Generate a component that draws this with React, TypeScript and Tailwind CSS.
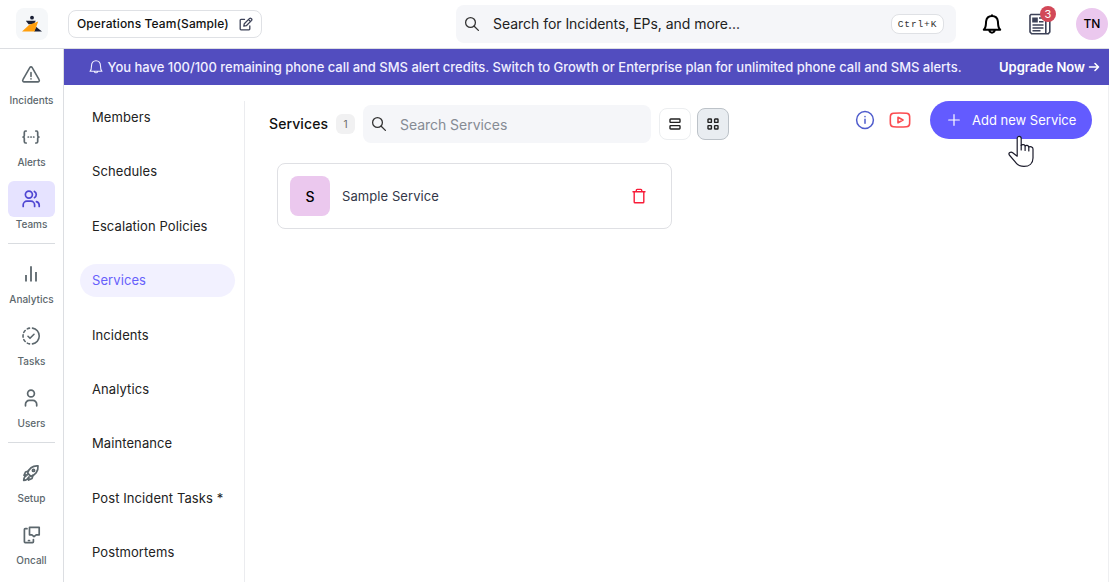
import React from 'react';

type IconProps = { className?: string };

const Svg = ({ children, className = '', box = 24, sw = 1.5 }: { children: React.ReactNode; className?: string; box?: number; sw?: number }) => (
  <svg viewBox={`0 0 ${box} ${box}`} fill="none" stroke="currentColor" strokeWidth={sw} strokeLinecap="round" strokeLinejoin="round" className={`shrink-0 ${className}`}>
    {children}
  </svg>
);

const WarningIcon = () => (
  <Svg className="size-5" box={20} sw={1.6}>
    <path d="M8.8 2.6 1.9 14.6a1.5 1.5 0 0 0 1.3 2.3h13.6a1.5 1.5 0 0 0 1.3-2.3L11.2 2.6a1.4 1.4 0 0 0-2.4 0Z" />
    <path d="M10 7.5v4M10 13.7v.2" />
  </Svg>
);
const BracesIcon = () => (
  <Svg className="size-5" box={20} sw={1.7}>
    <path d="M5.2 4H4.6Q3.3 4 3.3 5.4V8.4Q3.3 10 2 10Q3.3 10 3.3 11.6V14.6Q3.3 16 4.6 16H5.2M14.8 4h.6q1.3 0 1.3 1.4v3q0 1.6 1.3 1.6q-1.3 0-1.3 1.6v3q0 1.4-1.3 1.4h-.6" />
    <path d="M7.2 10h.3M9.9 10h.3M12.6 10h.3" />
  </Svg>
);
const TeamsIcon = () => (
  <Svg className="size-5" box={20} sw={1.7}>
    <circle cx="7.9" cy="5.6" r="3.5" />
    <path d="M2.2 17.5v-1.7a3.7 3.7 0 0 1 3.7-3.6h4a3.7 3.7 0 0 1 3.7 3.6v1.7M13.4 2.5a3.5 3.5 0 0 1 0 6.2M15.4 12.6a3.7 3.7 0 0 1 2.8 3.4v1.5" />
  </Svg>
);
const ChartIcon = () => (
  <Svg className="size-5" box={20} sw={1.8}>
    <path d="M5 11v6.500M10 2.300v15.200M15 8v9.500" strokeLinecap="butt" />
  </Svg>
);
const TasksIcon = () => (
  <Svg className="size-5" box={20} sw={1.6}>
    <path d="M11.5 2.1a8 8 0 0 1 0 15.8M8.5 2.1a8 8 0 0 0-2.2.8M4.2 4.5a8 8 0 0 0-1.4 2M2.1 8.8a8 8 0 0 0 0 2.4M2.8 13.6a8 8 0 0 0 1.4 1.9M6.3 17.1a8 8 0 0 0 2.2.8M7 10.3l2 2 4-4" />
  </Svg>
);
const UserIcon = () => (
  <Svg className="size-5" box={20} sw={1.7}>
    <circle cx="10" cy="5.5" r="3.4" />
    <path d="M4.500 17.800v-1.500a3.800 3.800 0 0 1 3.800-3.900h3.600a3.800 3.800 0 0 1 3.800 3.900v1.500" />
  </Svg>
);
const RocketIcon = () => (
  <Svg className="size-5" box={20} sw={1.700}>
    <path d="M6.700 10.100C7.500 5.800 11.500 2.400 17 2.900 17.500 8.400 14 12.500 9.800 13.300Z" />
    <circle cx="12.500" cy="7.400" r="1.100" />
    <path d="M7.500 8.100 4.500 9 3 12.300l3.300-.4M11.900 12.400 11 15.500l-3.400 1.600.4-3.300M5.200 12.800C3.200 13.600 2.800 15.200 2.700 17.300c2 0 3.800-.5 4.500-2.500" />
  </Svg>
);
const OncallIcon = () => (
  <Svg className="size-5" box={20} sw={1.700}>
    <path d="M8.500 2.300h9.700v7.500h-3l-2.200 1.900-2.100-1.900H8.500ZM6 3.700H4.200q-.8 0-.8.8v12.300q0 .8.8.8h7.400q.8 0 .8-.8v-2.300M7.500 15.500h1" />
  </Svg>
);
const SearchIcon = ({ className = '' }: IconProps) => (
  <Svg className={`size-4 ${className}`} box={16} sw={1.300}>
    <circle cx="6.500" cy="6.500" r="4.900" />
    <path d="m10.200 10.200 4.200 4.200" />
  </Svg>
);
const BellIcon = ({ className = '' }: IconProps) => (
  <Svg className={className} sw={2}>
    <path d="M3.800 17.800h16.400M3.800 17.600c2.400-1.800 2-5 2.300-8.200C6.500 6.100 8.900 4 12 4s5.500 2.100 5.900 5.400c.3 3.200-.1 6.400 2.300 8.200M12 3.700v-.5M9.300 18.600a2.800 2.800 0 0 0 5.400 0" />
  </Svg>
);
const AlertBellIcon = () => (
  <Svg className="size-4" box={16} sw={1.100}>
    <path d="M2 12.300h12c-1.400-1.200-1.500-2.800-1.500-5.300C12.500 4 10.700 1.700 8 1.700S3.500 4 3.500 7c0 2.500-.1 4.100-1.500 5.300ZM6.300 12.600a1.800 1.800 0 0 0 3.400 0" />
  </Svg>
);

const Logo = () => (
  <svg viewBox="0 0 32 32" className="size-8 rounded-lg bg-[#f5f7f9]">
    <circle cx="16" cy="9.700" r="1.900" fill="#1b2036" />
    <path d="M9.800 12.800h10l-2 3.400h-5.300Z" fill="#1b2036" />
    <path d="M20 18.800 26 23.400H18Z" fill="#1b2036" />
    <path d="M22.200 13.400 18.500 23.400H6l7.300-6.600Z" fill="#ff9f0e" />
  </svg>
);

const NewsIcon = () => (
  <svg viewBox="0 0 24 24" fill="none" stroke="#3d4258" strokeWidth="1.600" className="size-6">
    <path d="M3 2.500h14.800v19.200H3.600L2 20V3.500ZM17.800 6.500h4V20l-1.500 1.700h-3.600" />
    <path d="M5 6.200h4v3.600H5Z" fill="#3d4258" />
    <path d="M11 6h4.500M11 9.700h4.500M4.500 13h11M4.500 16h11M4.500 18.700h8" />
  </svg>
);

type NavItemProps = { label: string; icon: React.ReactNode; active?: boolean };
const NavItem = ({ label, icon, active }: NavItemProps) => (
  <div className="flex h-[62px] flex-col items-center text-[#5c676d]">
    <div className={`flex h-9 w-[47px] items-center rounded-md pl-[13px] ${active ? 'bg-[#e6e3ff] text-[#4f46d2]' : ''}`}>{icon}</div>
    <span className="text-[10px] font-medium leading-[15px]">{label}</span>
  </div>
);
const Divider = () => <div className="mb-3 h-px w-[47px] bg-[#d9dce0]" />;

const Sidebar = () => (
  <nav className="flex w-16 shrink-0 flex-col border-r border-[#dcdee2] pl-2 pt-2">
    <div className="w-[47px]">
      <NavItem label="Incidents" icon={<WarningIcon />} />
      <NavItem label="Alerts" icon={<BracesIcon />} />
      <NavItem label="Teams" icon={<TeamsIcon />} active />
      <Divider />
      <NavItem label="Analytics" icon={<ChartIcon />} />
      <NavItem label="Tasks" icon={<TasksIcon />} />
      <NavItem label="Users" icon={<UserIcon />} />
      <Divider />
      <NavItem label="Setup" icon={<RocketIcon />} />
      <NavItem label="Oncall" icon={<OncallIcon />} />
    </div>
  </nav>
);

const Header = () => (
  <header className="flex h-[49px] shrink-0 items-center border-b border-[#dcdee2] pl-4">
    <Logo />
    <div className="ml-5 flex h-7 w-[194px] shrink-0 items-center rounded-lg border border-[#dfe1e5] pl-2">
      <span className="w-[162px] whitespace-nowrap text-[12px] font-medium tracking-[0.11px] text-[#111]">Operations Team(Sample)</span>
      <Svg className="size-3.5 text-[#3d4258]" box={14} sw={1.300}>
        <path d="M5.500 2.400H2Q1.200 2.400 1.200 3.200V12Q1.200 12.800 2 12.800H10Q10.800 12.800 10.800 12V9M4.800 9.200l.5-2.500L10.600 1.400q.7-.6 1.400 0l.6.600q.6.700 0 1.400L7.300 8.700ZM9.600 2.600l2 2" />
      </Svg>
    </div>
    <div className="ml-[194px] flex h-[38px] w-[500px] shrink-0 items-center rounded-lg bg-[#f5f6f9] pl-2">
      <SearchIcon className="text-[#333]" />
      <span className="ml-[13px] flex-1 whitespace-nowrap pb-0.5 text-[14px] tracking-[-0.035px] text-[#222]">Search for Incidents, EPs, and more...</span>
      <span className="mr-3 flex h-5 w-[53px] items-center justify-center rounded-lg border border-[#dfe1e5] bg-white pt-0.5 font-['Liberation_Mono',monospace] text-[9.500px] tracking-[0.9px] text-[#333]">Ctrl+K</span>
    </div>
    <BellIcon className="ml-6 size-6 text-black" />
    <div className="relative ml-6 size-6 shrink-0">
      <NewsIcon />
      <span className="absolute -top-1.5 left-3 flex size-4 items-center justify-center rounded-full bg-[#d24858] text-[11px] leading-none text-white">3</span>
    </div>
    <div className="ml-6 flex size-8 shrink-0 items-center justify-center rounded-full bg-[#ebc8ee] text-[12px] font-medium text-black">TN</div>
  </header>
);

const Banner = () => (
  <div className="flex h-9 shrink-0 items-center bg-[#524dbf] pl-6 text-[13px] font-medium text-[#f1f0ff]">
    <AlertBellIcon />
    <span className="ml-[3.5px] flex-1 whitespace-nowrap pt-0.5 tracking-[-0.014px]">You have 100/100 remaining phone call and SMS alert credits. Switch to Growth or Enterprise plan for unlimited phone call and SMS alerts.</span>
    <span className="flex w-[110px] items-center whitespace-nowrap font-semibold text-white">
      <span className="w-[89px] pt-0.5">Upgrade Now</span>
      <Svg className="size-3" box={12} sw={1.600}><path d="M1.500 6h9M7 2.500 10.500 6 7 9.500" /></Svg>
    </span>
  </div>
);

const TABS = ['Members', 'Schedules', 'Escalation Policies', 'Services', 'Incidents', 'Analytics', 'Maintenance', 'Post Incident Tasks *', 'Postmortems'];

const SubNav = () => (
  <div className="mt-4 flex w-[181px] shrink-0 flex-col gap-[21.4px] border-r border-[#ebecef] pl-4">
    {TABS.map((t) => (
      <div key={t} className={`flex h-[33px] w-[155px] shrink-0 items-center whitespace-nowrap rounded-full pl-3 pt-[0.5px] text-[13px] tracking-[0.09px] ${t === 'Services' ? 'bg-[#f2f1ff] text-[#6760fb]' : 'text-[#222]'}`}>{t}</div>
    ))}
  </div>
);

const Toolbar = () => (
  <div className="flex h-[46px] items-center">
    <span className="w-[67px] pb-0.5 text-[14px] font-medium tracking-[0.1px] text-[#111]">Services</span>
    <span className="flex h-5 w-[19px] items-center justify-center rounded-md bg-[#f1f1f2] text-[10px] text-[#666]">1</span>
    <div className="ml-2 flex h-[38px] w-[288px] items-center rounded-lg bg-[#f5f6f9] pl-2">
      <SearchIcon className="text-[#333]" />
      <span className="ml-[13px] pt-px text-[14px] tracking-[-0.04px] text-[#858b94]">Search Services</span>
    </div>
    <div className="ml-2 flex size-8 items-center justify-center rounded-lg border border-[#eceef0] text-[#222]">
      <Svg className="size-3" box={12} sw={1.400}><rect x="1" y="1" width="10" height="3.400" rx=".7" /><rect x="1" y="7.600" width="10" height="3.400" rx=".7" /></Svg>
    </div>
    <div className="ml-1.5 flex size-8 items-center justify-center rounded-lg border border-[#bcc2c8] bg-[#e9edf1] text-[#222]">
      <Svg className="size-3" box={12} sw={1.400}><rect x="1" y="1" width="3.400" height="3.400" rx=".5" /><rect x="7.600" y="1" width="3.400" height="3.400" rx=".5" /><rect x="1" y="7.600" width="3.400" height="3.400" rx=".5" /><rect x="7.600" y="7.600" width="3.400" height="3.400" rx=".5" /></Svg>
    </div>
  </div>
);

const HandCursor = () => (
  <svg viewBox="0 0 28 34" className="absolute left-[78px] top-[34px] h-[34px] w-7">
    <path d="M9.200 3.600c0-3 4-3 4 0v6.800c.8-1.300 3.600-1 3.900.6 1-1.100 3.400-.7 3.700 1 1.200-.9 4.200-.2 4.200 1.900v9c0 5.600-4 8.500-9 8.500-4.200 0-6.800-1.600-9-4.800L1.300 20c-1.300-2 1.500-3.800 3.400-2.300l4.500 3.500Z" fill="#fff" stroke="#1b1b2b" strokeWidth="1.200" strokeLinejoin="round" />
    <path d="M13.200 10.400V15M17.100 11v4.500M20.800 12v4" stroke="#1b1b2b" strokeWidth="1.200" strokeLinecap="round" />
  </svg>
);

const ServiceCard = () => (
  <div className="ml-2 mt-4 flex h-[66px] w-[395px] items-center rounded-lg border border-[#dfe0e4] pl-3 pr-6">
    <div className="flex size-10 items-center justify-center rounded-lg bg-[#ebc8ee] text-[14px] font-medium text-black">S</div>
    <span className="ml-3 flex-1 pt-0.5 text-[13px] tracking-[0.08px] text-[#333748]">Sample Service</span>
    <Svg className="size-4 text-[#f81c39]" box={16} sw={1.400}>
      <path d="M2 3.700h12M5.300 3.700V2.200q0-.8.8-.8h3.800q.8 0 .8.8v1.500M3.200 3.700v10.200q0 .8.8.8h8q.8 0 .8-.8V3.700" />
    </Svg>
  </div>
);

const Main = () => (
  <main className="flex flex-1 border-r border-[#eeeff1] pl-6 pr-4">
    <div className="flex-1 pt-4">
      <Toolbar />
      <ServiceCard />
    </div>
    <div className="mt-4 flex h-[38px] items-center">
      <Svg className="size-5 text-[#4f5ccc]" box={20} sw={1.500}>
        <circle cx="10" cy="10" r="8.400" />
        <path d="M10 9.300v4M10 6.500v.2" />
      </Svg>
      <Svg className="ml-[13.5px] size-[22px] text-[#fb4b50]" box={22} sw={1.600}>
        <path d="M4.500 4.200Q11 3.700 17.500 4.200 20.500 4.400 20.600 7.200 20.800 11 20.600 14.800 20.500 17.600 17.500 17.800 11 18.300 4.500 17.800 1.500 17.600 1.400 14.800 1.200 11 1.400 7.200 1.500 4.400 4.500 4.200Z" />
        <path d="m9 8.200 5 2.800-5 2.800Z" />
      </Svg>
      <div className="relative ml-[19.5px] flex h-[38px] w-[162px] items-center whitespace-nowrap rounded-full bg-[#635bff] pl-[18px] text-[13px] text-white">
        <Svg className="size-3" box={12} sw={1.200}><path d="M6 .7v10.600M.7 6h10.600" /></Svg>
        <span className="ml-3 pt-0.5">Add new Service</span>
        <HandCursor />
      </div>
    </div>
  </main>
);

export default function App() {
  return (
    <div className="flex h-[582px] w-[1109px] flex-col overflow-hidden bg-white font-['Inter',sans-serif]">
      <Header />
      <div className="flex min-h-0 flex-1">
        <Sidebar />
        <div className="flex min-w-0 flex-1 flex-col">
          <Banner />
          <div className="flex min-h-0 flex-1">
            <SubNav />
            <Main />
          </div>
        </div>
      </div>
    </div>
  );
}
